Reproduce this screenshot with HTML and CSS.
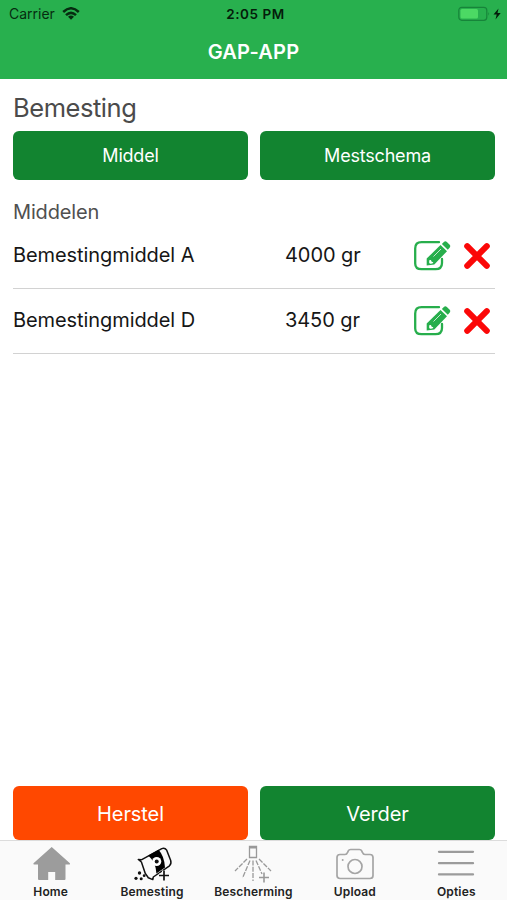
FILE: index.html
```html
<!DOCTYPE html>
<html lang="nl">
<head>
<meta charset="utf-8">
<title>GAP-APP</title>
<link rel="stylesheet" href="styles.css">
</head>
<body>
<svg class="symbols" width="0" height="0" aria-hidden="true">
  <symbol id="edit" viewBox="0 0 38 32">
    <path d="M26 2.200H8.500Q2.200 2.200 2.200 8.500V23.500Q2.200 29.200 8.500 29.200H22.500Q29 29.200 29 23V19" fill="none" stroke="#27ae4c" stroke-width="2.300" stroke-linecap="round"/>
    <path d="M27.500 4.900 34 11.200 21.300 24.500 13.700 25.500V18.600Z" fill="#27ae4c"/>
    <path d="m28.900 3.900 2.200-2.200q1.300-1.200 2.800.2l2.800 2.800q1.300 1.400.1 2.700l-2 2.300Z" fill="#27ae4c"/>
    <path d="m16.200 20.300 1.700-.2.800 1.600 1.700.6-1 1.200-2.300.3-.9-.9Z" fill="#fff"/>
    <path d="m20.500 16.500 7.500-7.500" stroke="#d5f0dc" stroke-width=".9"/>
  </symbol>
  <symbol id="remove" viewBox="0 0 28 28">
    <path d="m4.200 4.200 19.600 19.600m0-19.600L4.200 23.800" stroke="#fb0808" stroke-width="6" stroke-linecap="round"/>
  </symbol>
</svg>
<header class="header">
  <div class="status">
    <div class="carrier"><span>Carrier</span>
      <svg width="18" height="13" viewBox="0 0 18 13" fill="none" stroke="#062c10" stroke-width="2.500"><path d="M1.200 5Q9-2.400 16.800 5M4 8.200Q9 3.500 14 8.200"/><path d="M6 9.800Q9 7.200 12 9.800L9 12.800Z" fill="#062c10" stroke="none"/></svg>
    </div>
    <time class="clock">2:05 PM</time>
    <svg class="battery" width="44" height="16" viewBox="0 0 44 16"><rect x=".8" y="1.300" width="28" height="13" rx="3" fill="none" stroke="#17843a" stroke-width="1.200"/><rect x="2.500" y="3" width="17.500" height="9.600" rx="1.500" fill="#4cd964"/><path d="M30.300 6q1.800 1.800 0 3.700Z" fill="#17843a"/><path d="m40.500 2.500-5 6h3.200l-1.200 5 5.200-6.400h-3.200Z" fill="#041c0a"/></svg>
  </div>
  <h1 class="app-title">GAP-APP</h1>
</header>
<main class="content">
  <h2 class="page-title">Bemesting</h2>
  <div class="buttons">
    <button class="button">Middel</button>
    <button class="button">Mestschema</button>
  </div>
  <h3 class="section-title">Middelen</h3>
  <ul class="list">
    <li class="row"><span>Bemestingmiddel A</span><span class="amount">4000 gr</span><svg class="edit"><use href="#edit"/></svg><svg class="remove"><use href="#remove"/></svg></li>
    <li class="row"><span>Bemestingmiddel D</span><span class="amount">3450 gr</span><svg class="edit"><use href="#edit"/></svg><svg class="remove"><use href="#remove"/></svg></li>
  </ul>
  <div class="buttons actions">
    <button class="button reset">Herstel</button>
    <button class="button">Verder</button>
  </div>
</main>
<nav class="tabs">
  <a class="tab"><svg width="40" height="40" viewBox="0 0 40 40"><path d="M20.700 6 2.500 22.300q-.6 1.200.8 1.300H7V38q0 1 1 1h9.200v-8h7v8H33.500q1 0 1-1V23.600h3.700q1.300-.1.700-1.300Z" fill="#9c9c9c"/></svg><span>Home</span></a>
  <a class="tab"><svg width="40" height="40" viewBox="0 0 40 40"><g transform="translate(1 0)"><path d="m5.300 18.500 3 .3L28.800 7.600q3-1.200 4.900 1.600l4 10.200q.9 3.300-1.200 5.400L20.300 36l-.5 2.600-4.500-1.900-3-4.300L8.400 21Z" fill="none" stroke="#111" stroke-width="1.500" stroke-linejoin="round"/><path d="m15.300 14.500 10.300-5.700q5.800 6.500 6.400 17.700l-8.600 6q-.4-11-8.100-18Z" fill="#000"/><circle cx="23.700" cy="20.500" r="4.600" fill="#fff"/><circle cx="23.700" cy="20.500" r="2" fill="#111"/><path d="M26 34.500h10M31 29.500v10" stroke="#fafafa" stroke-width="4"/><path d="M26 34.500h10M31 29.500v10" stroke="#111" stroke-width="1.700"/><g fill="#111"><circle cx="6.500" cy="32" r="1.700"/><circle cx="3" cy="37.300" r="1.600"/><circle cx="8.200" cy="37.700" r="1.500"/><circle cx="11.200" cy="34.700" r="1.400"/></g></g></svg><span>Bemesting</span></a>
  <a class="tab"><svg width="40" height="40" viewBox="0 0 40 40" fill="none" stroke="#999" stroke-width="1.300"><path d="M16.500 16.500V5.500h7v11Z"/><path d="M16 6.500h8" stroke-width="2"/><path d="M14 18 2 30M17 19.500 9.500 37M20 19.500V40M23 19.500 29 33M26 18l12 12" stroke-dasharray="5 1.300"/><path d="M26 36.500h10M31 31.500v10" stroke-width="1.600"/></svg><span>Bescherming</span></a>
  <a class="tab"><svg width="40" height="40" viewBox="0 0 40 40" fill="none" stroke="#a5a5a5" stroke-width="1.700"><path d="M5 13.500h5q1.800 0 2.500-2l.8-1.600q.7-1.400 2.200-1.400h9q1.500 0 2.200 1.400l.8 1.600q.7 2 2.500 2h5q3 0 3 3V34.500q0 3-3 3H5q-3 0-3-3V16.500q0-3 3-3Z"/><circle cx="20" cy="25.500" r="7"/><circle cx="7.700" cy="19" r="1" fill="#a5a5a5" stroke="none"/></svg><span>Upload</span></a>
  <a class="tab"><svg width="40" height="40" viewBox="0 0 40 40" stroke="#9b9b9b" stroke-width="2.300" stroke-linecap="round"><path d="M3 10.800h34M3 22.200h34M3 33.400h34"/></svg><span>Opties</span></a>
</nav>
</body>
</html>
```

FILE: styles.css
```css
* { box-sizing: border-box; }
body {
  margin: 0;
  height: 900px;
  display: flex;
  flex-direction: column;
  background: #fff;
  color: #161616;
  font-family: Inter, "Liberation Sans", sans-serif;
  overflow: hidden;
}
h1, h2, h3, ul { margin: 0; padding: 0; font-weight: 400; }
.symbols { position: absolute; }
.header { height: 79px; background: #28b04e; }
.status {
  height: 27px;
  padding: 0 5px 0 9px;
  display: grid;
  grid-template-columns: 1fr auto 1fr;
  align-items: center;
  color: #062c10;
}
.carrier { display: flex; align-items: center; gap: 7px; font-size: 14px; }
.carrier svg { margin-bottom: 1px; }
.clock { color: #041c0a; font-size: 13.5px; font-weight: 600; letter-spacing: .55px; }
.battery { justify-self: end; }
.app-title { color: #fff; font-size: 20px; font-weight: 600; line-height: 51px; letter-spacing: .2px; text-align: center; }
.content { flex: 1; display: flex; flex-direction: column; padding: 0 12px 0 13px; }
.page-title { height: 52px; font-size: 25.5px; line-height: 58px; letter-spacing: -.45px; color: #4b4b4b; }
.buttons { display: grid; grid-template-columns: 1fr 1fr; gap: 12px; height: 49px; }
.button {
  border: 0;
  border-radius: 6px;
  padding: 0;
  background: #128430;
  color: #fff;
  font: 400 18px Inter, "Liberation Sans", sans-serif;
  letter-spacing: -.2px;
}
.section-title { height: 43px; font-size: 20px; line-height: 64px; letter-spacing: -.15px; color: #505050; }
.list { list-style: none; }
.row {
  display: grid;
  grid-template-columns: 272px 128px 38px 1fr;
  align-items: center;
  height: 65px;
  border-bottom: 1px solid #d2d2d2;
  font-size: 20px;
  letter-spacing: -.08px;
}
.row span { padding-bottom: 2px; }
.edit { width: 38px; height: 32px; }
.remove { width: 28px; height: 28px; margin-left: 12px; }
.row:first-child { height: 65px; }
.actions { height: 54px; margin-top: auto; }
.actions .button { font-size: 20px; padding-top: 1px; letter-spacing: -.1px; }
.actions .reset { background: #ff4800; }
.tabs {
  height: 60px;
  display: grid;
  grid-template-columns: repeat(5, 1fr);
  background: #fafafa;
  border-top: 1px solid #dcdcdc;
}
.tab { display: flex; flex-direction: column; align-items: center; color: #222; font-size: 12px; font-weight: 600; line-height: 18px; letter-spacing: .15px; }
.row:first-child { margin-top: 1px; }
.tab svg { overflow: visible; margin-bottom: 2px; }
```
